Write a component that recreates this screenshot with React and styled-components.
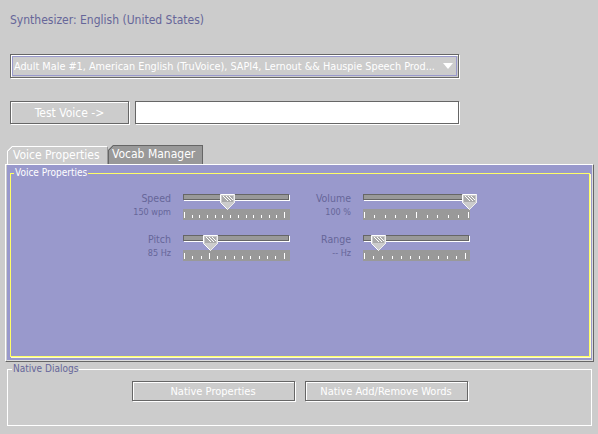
import React from 'react';
import styled, {createGlobalStyle} from 'styled-components';

const FONT = `"DejaVu Sans Condensed", "DejaVu Sans", sans-serif`;

const GlobalStyle = createGlobalStyle`
    body {
        margin: 0;
        background: #cccccc;
        font-family: ${FONT};
    }
`;

const Page = styled.div`
    width: 598px;
    height: 434px;
    background: #cccccc;
    overflow: hidden;
    display: flex;
    flex-direction: column;
    align-items: flex-start;
`;

const Title = styled.div`
    margin: 12px 0 0 10px;
    font-size: 12px;
    line-height: 16px;
    color: #666699;
`;

const Combo = styled.div`
    box-sizing: border-box;
    margin: 26px 0 0 10px;
    width: 449px;
    height: 24px;
    padding: 1px;
    border: 1px solid #666666;
    box-shadow: 1px 1px 0 #ffffff, inset 1px 1px 0 #ffffff;
`;

const ComboInner = styled.div`
    box-sizing: border-box;
    height: 100%;
    border: 1px solid #9999cc;
    display: flex;
    align-items: center;
    justify-content: space-between;
    padding: 0 3px 0 1px;
    color: #ffffff;
    font-size: 10.8px;
`;

const ComboText = styled.span`
    white-space: nowrap;
    overflow: hidden;
`;

const Row = styled.div`
    display: flex;
    gap: 6px;
    margin: 23px 0 0 10px;
`;

const MetalButton = styled.button`
    box-sizing: border-box;
    width: ${p => p.$w}px;
    height: ${p => p.$h}px;
    padding: 0;
    border: 1px solid #666666;
    background: #cccccc;
    box-shadow: 1px 1px 0 #ffffff, inset 1px 1px 0 #ffffff;
    color: #ffffff;
    font-family: ${FONT};
    font-size: ${p => p.$size}px;
`;

const TextField = styled.div`
    box-sizing: border-box;
    width: 324px;
    height: 23px;
    border: 1px solid #666666;
    box-shadow: 1px 1px 0 #ffffff;
    background: #ffffff;
`;

const TabStrip = styled.div`
    display: flex;
    align-items: flex-end;
    height: 19px;
    margin-top: 21px;
    padding-left: 7px;
`;

const Tab = styled.div`
    box-sizing: border-box;
    width: ${p => p.$w}px;
    height: ${p => (p.$active ? 18 : 19)}px;
    padding-left: ${p => p.$pad}px;
    font-size: 12px;
    line-height: 17px;
    color: #ffffff;
    border-top: 1px solid ${p => (p.$active ? '#ffffff' : '#666666')};
    border-left: 1px solid ${p => (p.$active ? '#ffffff' : '#666666')};
    border-right: 1px solid ${p => (p.$active ? '#999999' : '#666666')};
    clip-path: polygon(5px 0, 100% 0, 100% 100%, 0 100%, 0 5px);
    background-origin: border-box;
    background-image: linear-gradient(
        135deg,
        transparent 0 3.2px,
        ${p => (p.$active ? '#ffffff' : '#666666')} 3.2px 4.6px,
        ${p => (p.$active ? '#cccccc' : '#999999')} 4.6px
    );
`;

const Frame = styled.div`
    box-sizing: border-box;
    margin-left: 5px;
    width: 589px;
    height: 198px;
    padding-left: 1px;
    border-top: 1px solid #ffffff;
    border-left: 1px solid #ffffff;
    border-right: 1px solid #666666;
    border-bottom: 1px solid #666666;
`;

const Lavender = styled.div`
    box-sizing: border-box;
    height: 100%;
    padding: 8px 2px 0 3px;
    background: #9999cc;
    border-right: 1px solid #dddddd;
    border-bottom: 1px solid #dddddd;
`;

const GroupBox = styled.div`
    position: relative;
    box-sizing: border-box;
    width: ${p => p.$w}px;
    height: ${p => p.$h}px;
    border: 1px solid ${p => p.$line};
    box-shadow: ${p => (p.$glow ? `1px 1px 0 ${p.$glow}` : 'none')};
`;

const Legend = styled.span`
    position: absolute;
    top: -7px;
    left: ${p => p.$left}px;
    padding: 0 1px;
    font-size: 10px;
    line-height: 12px;
    color: ${p => p.$color};
    background: ${p => p.$bg};
`;

const SliderGrid = styled.div`
    display: grid;
    grid-template-columns: 179px 179px;
    column-gap: 1px;
    row-gap: 12px;
    margin: 17px 0 0 100px;
`;

const Control = styled.div`
    display: flex;
    gap: 12px;
`;

const Labels = styled.div`
    width: 60px;
    padding-top: 1px;
    text-align: right;
    color: #666699;
`;

const LabelText = styled.div`
    font-size: 10.5px;
    line-height: 13px;
`;

const ValueText = styled.div`
    font-size: 9px;
    line-height: 14px;
`;

const SliderCol = styled.div`
    width: 107px;
`;

const TrackArea = styled.div`
    position: relative;
    height: 12px;
`;

const Track = styled.div`
    box-sizing: border-box;
    margin-top: 3px;
    width: 106px;
    height: 6px;
    border: 1px solid #666666;
    box-shadow: 1px 1px 0 #ffffff;
    background: #999999;
`;

const ThumbSlot = styled.div`
    position: absolute;
    top: 0;
    left: ${p => p.$left}px;
    width: 15px;
    height: 16px;
`;

const TickBar = styled.div`
    box-sizing: border-box;
    margin-top: 3px;
    height: 11px;
    background: #999999;
    display: flex;
    align-items: flex-end;
    gap: ${p => p.$gap}px;
    padding: 0 0 2px 1px;
`;

const Tick = styled.span`
    flex: none;
    width: 1px;
    height: ${p => (p.$major ? 6 : 3)}px;
    background: #ffffff;
`;

const NativeGroup = styled(GroupBox)`
    margin: 7px 0 0 7px;
    display: flex;
    justify-content: center;
    align-items: flex-start;
    gap: 10px;
    padding-top: 11px;
`;

const Thumb = () => (
    <svg width="15" height="16" viewBox="0 0 15 16">
        <path d="M0.5 0.5 H14.5 V8.5 L7.5 15.5 L0.5 8.5 Z" fill="#cccccc" stroke="#ffffff" />
        <rect x="2" y="2" width="11" height="6" fill="#aaaaaa" />
        <path d="M3 2 L8 7 M6 2 L11 7 M9 2 L13 6" stroke="#ffffff" strokeWidth="1" />
        <path d="M14.5 0.5 V8.5 L7.5 15.5" fill="none" stroke="#eeeeee" />
    </svg>
);

const ArrowDown = () => (
    <svg width="10" height="6" viewBox="0 0 10 6">
        <polygon points="0,0 10,0 5,6" fill="#ffffff" />
    </svg>
);

const sliders = [
    {label: 'Speed', value: '150 wpm', thumb: 37, ticks: 14, gap: 6.7, majors: [0, 13]},
    {label: 'Volume', value: '100 %', thumb: 99, ticks: 11, gap: 9.45, majors: [0, 5, 10]},
    {label: 'Pitch', value: '85 Hz', thumb: 20, ticks: 13, gap: 7.3, majors: [0, 3, 12]},
    {label: 'Range', value: '-- Hz', thumb: 8, ticks: 12, gap: 8.2, majors: [0, 11]},
];

const Slider = ({s}) => (
    <Control>
        <Labels>
            <LabelText>{s.label}</LabelText>
            <ValueText>{s.value}</ValueText>
        </Labels>
        <SliderCol>
            <TrackArea>
                <Track />
                <ThumbSlot $left={s.thumb}>
                    <Thumb />
                </ThumbSlot>
            </TrackArea>
            <TickBar $gap={s.gap}>
                {Array.from({length: s.ticks}, (_, i) => (
                    <Tick key={i} $major={s.majors.includes(i)} />
                ))}
            </TickBar>
        </SliderCol>
    </Control>
);

const App = () => {
    return (
        <Page>
            <GlobalStyle />
            <Title>Synthesizer: English (United States)</Title>
            <Combo>
                <ComboInner>
                    <ComboText>
                        {'Adult Male #1, American English (TruVoice), SAPI4, Lernout && Hauspie Speech Prod...'}
                    </ComboText>
                    <ArrowDown />
                </ComboInner>
            </Combo>
            <Row>
                <MetalButton $w={119} $h={23} $size={12}>Test Voice -&gt;</MetalButton>
                <TextField />
            </Row>
            <TabStrip>
                <Tab $active $w={101} $pad={5}>Voice Properties</Tab>
                <Tab $w={95} $pad={3}>Vocab Manager</Tab>
            </TabStrip>
            <Frame>
                <Lavender>
                    <GroupBox $w={580} $h={184} $line="#ffff66" $glow="#ffffcc">
                        <Legend $left={3} $color="#ffffff" $bg="#9999cc">Voice Properties</Legend>
                        <SliderGrid>
                            {sliders.map(s => <Slider key={s.label} s={s} />)}
                        </SliderGrid>
                    </GroupBox>
                </Lavender>
            </Frame>
            <NativeGroup $w={585} $h={57} $line="#ffffff">
                <Legend $left={4} $color="#666699" $bg="#cccccc">Native Dialogs</Legend>
                <MetalButton $w={163} $h={20} $size={11}>Native Properties</MetalButton>
                <MetalButton $w={163} $h={20} $size={11}>Native Add/Remove Words</MetalButton>
            </NativeGroup>
        </Page>
    );
};

export default App;
